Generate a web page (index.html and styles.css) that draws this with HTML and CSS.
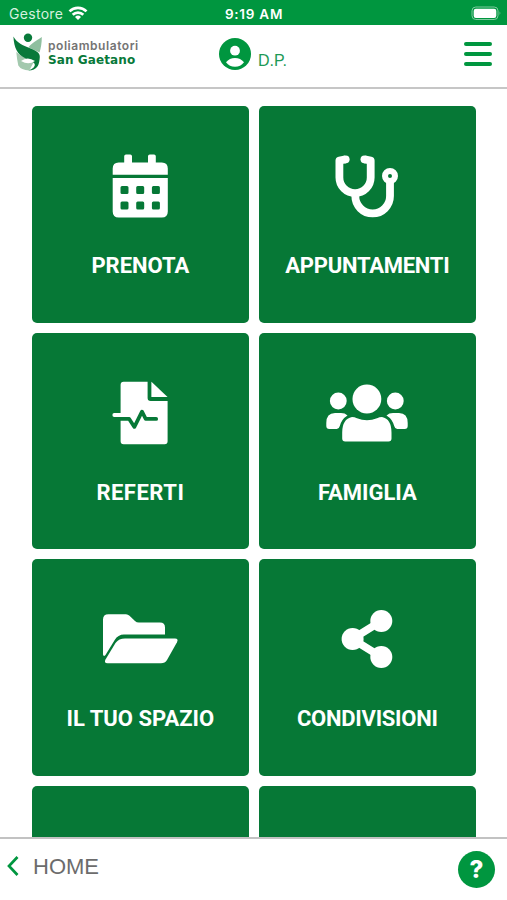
FILE: index.html
```html
<!DOCTYPE html>
<html lang="it">
<head>
    <meta charset="UTF-8">
    <meta name="viewport" content="width=device-width, initial-scale=1.0">
    <title>Poliambulatori San Gaetano</title>
    <link rel="stylesheet" href="styles.css">
</head>
<body>
    <div class="status-bar">
        <div class="carrier">
            <span>Gestore</span>
            <svg width="20" height="15" viewBox="0 0 20 15" fill="none" stroke="#fff" stroke-width="2.7">
                <path d="M1.5 5.4a12.2 12.2 0 0 1 17 0"/>
                <path d="M4.7 8.8a7.6 7.6 0 0 1 10.6 0"/>
                <path d="M10 14l-3-3.1a4.3 4.3 0 0 1 6 0z" fill="#fff" stroke="none"/>
            </svg>
        </div>
        <div class="time">9:19 AM</div>
        <div class="battery">
            <svg width="31" height="15" viewBox="0 0 31 15">
                <rect x="1" y="1" width="26" height="12.5" rx="3.8" fill="none" stroke="#7fcb9f"/>
                <rect x="2.7" y="2.7" width="22.6" height="9.2" rx="2.2" fill="#fff"/>
                <path d="M28.6 5.3q1.8 2 0 4z" fill="#7fcb9f"/>
            </svg>
        </div>
    </div>

    <header class="header">
        <div class="logo">
            <svg width="29" height="38" viewBox="0 0 29 38">
                <path d="M28.8 4C28.8 10 28 15 26.5 19.500L15.5 14.300C18 10.500 23 8 28.800 4z" fill="#8fbf9f"/>
                <path d="M3.300 19q7 6.500 18 9l-5 9.500Q8 37 5.300 32.500 4 27 3.300 19z" fill="#a3c9ae"/>
                <path d="M.4 3.500C4 10 10 12.500 16.500 15c7 2.700 10.500 5 10.300 9-.2 3.500-.8 7-2 9-2 3-5.500 4.500-9.300 4.600 3-1.300 6-2.800 6.300-5.600.3-3-5-4.500-10-7C4.500 21.500 1 15 .4 3.500z" fill="#08793a"/>
                <path d="M8 28q6.500-5 14 0-6.500 4.500-14 0z" fill="#fff"/>
                <circle cx="15" cy="4.800" r="4.200" fill="#087a3a"/>
            </svg>
            <div class="logo-text">
                <span class="logo-top">poliambulatori</span>
                <span class="logo-name">San Gaetano</span>
            </div>
        </div>
        <div class="user">
            <svg width="32" height="32" viewBox="0 0 32 32">
                <circle cx="16" cy="16" r="16" fill="#00963f"/>
                <circle cx="16" cy="12.700" r="4.900" fill="#fff"/>
                <path d="M7 24.200q3.500-4.300 9-4.300t9 4.300q-3.500 4.500-9 4.500t-9-4.500z" fill="#fff"/>
            </svg>
            <span>D.P.</span>
        </div>
        <div class="menu">
            <i></i>
            <i></i>
            <i></i>
        </div>
    </header>

    <main class="content">
        <div class="grid">
            <div class="card">
                <svg class="icon" viewBox="0 0 84 66">
                    <path d="M14.700 21.700V15.500q0-6 6-6h5.500V3.300q0-1.800 1.800-1.800h4.200q1.800 0 1.800 1.800v6.200h16V3.300q0-1.800 1.800-1.800H56q1.800 0 1.800 1.800v6.200h6q6 0 6 6v6.200z"/>
                    <path fill-rule="evenodd" d="M14.700 25h55.100v33.500q0 6-6 6H20.700q-6 0-6-6zM24 33q-1.500 0-1.500 1.500v5q0 1.500 1.500 1.500h5q1.500 0 1.500-1.500v-5q0-1.500-1.500-1.500zM39.700 33q-1.500 0-1.500 1.500v5q0 1.500 1.500 1.500h5q1.500 0 1.500-1.500v-5q0-1.500-1.500-1.500zM55.400 33q-1.500 0-1.500 1.500v5q0 1.500 1.500 1.500h5q1.500 0 1.500-1.500v-5q0-1.500-1.500-1.500zM24 48.600q-1.500 0-1.500 1.500v5q0 1.500 1.500 1.500h5q1.500 0 1.500-1.500v-5q0-1.500-1.500-1.500zM39.700 48.600q-1.500 0-1.500 1.500v5q0 1.500 1.500 1.500h5q1.500 0 1.500-1.500v-5q0-1.500-1.500-1.500zM55.400 48.600q-1.500 0-1.500 1.500v5q0 1.500 1.500 1.500h5q1.500 0 1.500-1.500v-5q0-1.500-1.500-1.500z"/>
                </svg>
                <div class="label">PRENOTA</div>
            </div>
            <div class="card">
                <svg class="icon" viewBox="0 0 84 66">
                    <g fill="none" stroke="#fff" stroke-width="7.800">
                        <path d="M20.500 6.400L14.400 7.600V24.500a15.650 15.650 0 0 0 31.300 0V7.600L39.600 6.400" stroke-linejoin="round"/>
                        <path d="M30.300 40v3.100a17.350 17.350 0 0 0 34.700 0V29"/>
                        <circle cx="65" cy="23" r="5" stroke-width="6"/>
                    </g>
                    <circle cx="20.700" cy="6.300" r="3.900"/>
                    <circle cx="39.400" cy="6.300" r="3.900"/>
                </svg>
                <div class="label tight">APPUNTAMENTI</div>
            </div>
            <div class="card">
                <svg class="icon" viewBox="0 0 84 66">
                    <path d="M22.600 33V4.800q0-3 3-3h24V18q0 3 3 3h17v40.200q0 3-3 3h-41q-3 0-3-3V37h-6.400q-1.800 0-1.800-2t1.800-2z"/>
                    <path d="M53.400 1.800L69.600 17H53.400z"/>
                    <path d="M22 38.900h9.200l5.200 8L44 31.600l3.700 7.300h10.500" fill="none" stroke="#067836" stroke-width="3.700" stroke-linecap="round" stroke-linejoin="round"/>
                </svg>
                <div class="label wide">REFERTI</div>
            </div>
            <div class="card">
                <svg class="icon" viewBox="0 0 84 66">
                    <circle cx="41.900" cy="19" r="14.400"/>
                    <circle cx="13.300" cy="21" r="8.400"/>
                    <circle cx="70.300" cy="21" r="8.400"/>
                    <path d="M27 37q2.500 0 5 1.200 10 4 20 0 2.500-1.200 5-1.200 9.500 2 9.500 15.500v6q0 3-3 3H20.200q-3 0-3-3v-6Q17.200 39 27 37z"/>
                    <path d="M10 33h6q4 0 6.500 2.400-6 3.600-7.700 10.700-.8 3-3 3H4.300q-3 0-3-3V43Q1.300 33 10 33z"/>
                    <path d="M74 33h-6q-4 0-6.500 2.400 6 3.600 7.700 10.700.8 3 3 3h7.500q3 0 3-3V43Q82.700 33 74 33z"/>
                </svg>
                <div class="label">FAMIGLIA</div>
            </div>
            <div class="card">
                <svg class="icon" viewBox="0 0 84 66">
                    <path d="M5 48.500V13.500Q5 8.200 10.500 8.200H28q2 0 3.500 1.500l5.500 5.200q1.500 1.500 4 1.500h21q5 0 5 5v7.200H26q-6 0-9.300 5.500L7.500 49Q5.500 51 5 48.500z"/>
                    <path d="M27 32.600h50q3.800 0 2 3.700L69 54q-2 3.300-6 3.300H9.500q-3.800 0-2-3.700L17.500 37q3.500-4.400 9.500-4.400z"/>
                </svg>
                <div class="label">IL TUO SPAZIO</div>
            </div>
            <div class="card">
                <svg class="icon" viewBox="0 0 84 66">
                    <path d="M56.300 15L27.300 33l29 18" fill="none" stroke="#fff" stroke-width="7.800"/>
                    <circle cx="56.300" cy="15" r="11"/>
                    <circle cx="27.600" cy="33" r="11"/>
                    <circle cx="56.300" cy="51" r="11"/>
                </svg>
                <div class="label tight">CONDIVISIONI</div>
            </div>
            <div class="card"></div>
            <div class="card"></div>
        </div>
    </main>

    <footer class="footer">
        <div class="back">
            <svg width="12" height="20" viewBox="0 0 12 20" fill="none" stroke="#00963f" stroke-width="2.700">
                <path d="M10.500 1L2 10l8.500 9"/>
            </svg>
            <span>HOME</span>
        </div>
        <div class="help">?</div>
    </footer>
</body>
</html>
```
FILE: styles.css
```css
* {
    box-sizing: border-box;
}
body {
    margin: 0;
    height: 100vh;
    display: flex;
    flex-direction: column;
    overflow: hidden;
    background: #fff;
    font-family: "Liberation Sans", Arial, sans-serif;
}
svg {
    display: block;
    flex-shrink: 0;
}
.status-bar {
    display: grid;
    grid-template-columns: 1fr auto 1fr;
    align-items: center;
    height: 25px;
    padding: 2px 5px 0 9px;
    background: #00963f;
    color: #fff;
    font-family: Inter, sans-serif;
    font-size: 14px;
}
.carrier {
    display: flex;
    align-items: center;
    gap: 5px;
    color: #d5f0df;
    letter-spacing: 0.3px;
}
.time {
    padding-right: 3px;
    font-size: 13.5px;
    font-weight: 600;
    letter-spacing: 0.75px;
}
.battery {
    justify-self: end;
}
.header {
    display: grid;
    grid-template-columns: 206px 1fr auto;
    height: 64px;
    padding: 0 15px 0 13px;
    border-bottom: 2px solid #c6c6c6;
}
.logo {
    display: flex;
    gap: 6px;
    padding-top: 8px;
}
.logo-text {
    display: flex;
    flex-direction: column;
    padding-top: 6px;
    line-height: 14px;
    white-space: nowrap;
}
.logo-top {
    color: #747474;
    font-family: Inter, sans-serif;
    font-size: 12px;
    font-weight: 600;
    letter-spacing: 0.55px;
}
.logo-name {
    color: #08793a;
    font-family: "DejaVu Sans", sans-serif;
    font-size: 12px;
    font-weight: 700;
    letter-spacing: 0.1px;
}
.user {
    display: flex;
    gap: 7px;
    padding-top: 13px;
    color: #1d9a56;
    font-size: 16px;
}
.user span {
    padding-top: 14px;
}
.menu {
    display: flex;
    flex-direction: column;
    gap: 6px;
    padding-top: 17px;
}
.menu i {
    width: 28px;
    height: 4px;
    border-radius: 2px;
    background: #00963f;
}
.content {
    flex: 1;
    min-height: 0;
    padding: 17px 31.3px 0 32px;
    overflow: hidden;
}
.grid {
    display: grid;
    grid-template-columns: repeat(2, 216.7px);
    grid-auto-rows: 216.7px;
    gap: 10px 10.3px;
}
.card {
    display: flex;
    flex-direction: column;
    align-items: center;
    padding-top: 47px;
    border-radius: 5px;
    background: #067836;
}
.icon {
    width: 84px;
    height: 66px;
    fill: #fff;
}
.label {
    margin-top: 33px;
    color: #fff;
    font-family: Roboto, sans-serif;
    font-size: 22px;
    font-weight: 700;
    line-height: 28px;
    white-space: nowrap;
}
.label.tight {
    letter-spacing: -0.25px;
}
.label.wide {
    letter-spacing: 0.5px;
}
.footer {
    display: flex;
    justify-content: space-between;
    height: 63px;
    padding: 0 12px 0 7px;
    border-top: 2px solid #c2c2c2;
}
.back {
    display: flex;
    gap: 14px;
    padding-top: 17px;
    color: #6c6c6c;
    font-size: 22px;
    line-height: 22px;
}
.help {
    width: 37px;
    height: 37px;
    margin-top: 12px;
    border-radius: 50%;
    background: #00963f;
    color: #fff;
    font-family: Inter, sans-serif;
    font-size: 24px;
    font-weight: 800;
    line-height: 37px;
    text-align: center;
}
```
